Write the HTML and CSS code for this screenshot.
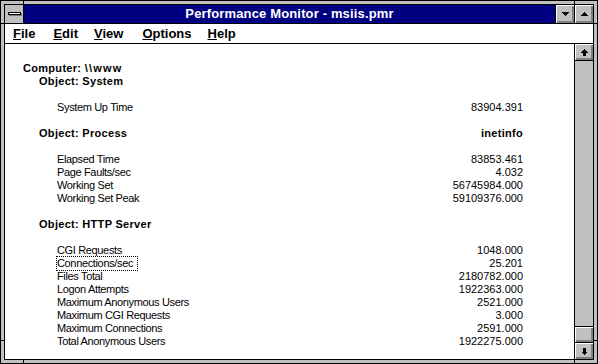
FILE: index.html
```html
<!DOCTYPE html>
<html lang="en">
<head>
    <meta charset="UTF-8">
    <title>Performance Monitor - msiis.pmr</title>
    <link rel="stylesheet" href="styles.css">
</head>
<body>
    <div class="window">
        <!-- frame corner ticks -->
        <div class="tick tick-top tick-left-x"></div>
        <div class="tick tick-top tick-right-x"></div>
        <div class="tick tick-bottom tick-left-x"></div>
        <div class="tick tick-bottom tick-right-x"></div>
        <div class="tick tick-side-l tick-up-y"></div>
        <div class="tick tick-side-l tick-down-y"></div>
        <div class="tick tick-side-r tick-up-y"></div>
        <div class="tick tick-side-r tick-down-y"></div>

        <div class="frame">
            <div class="titlebar">
                <div class="sysmenu"><span class="sysbar"></span></div>
                <div class="title">Performance Monitor - msiis.pmr</div>
                <div class="tbtn">
                    <svg width="7" height="4" viewBox="0 0 7 4" shape-rendering="crispEdges"><polygon points="0,0 7,0 3.5,4" fill="#000"/></svg>
                </div>
                <div class="tbtn">
                    <svg width="7" height="4" viewBox="0 0 7 4" shape-rendering="crispEdges"><polygon points="3.5,0 7,4 0,4" fill="#000"/></svg>
                </div>
            </div>

            <div class="menubar">
                <span class="menu"><u>F</u>ile</span>
                <span class="menu menu-edit"><u>E</u>dit</span>
                <span class="menu"><u>V</u>iew</span>
                <span class="menu menu-options"><u>O</u>ptions</span>
                <span class="menu"><u>H</u>elp</span>
            </div>

            <div class="client">
                <div class="report">
                    <div class="row head"><span>Computer: <span class="unc">\\www</span></span></div>
                    <div class="row head obj">Object: System</div>
                    <div class="blank"></div>
                    <div class="row ctr"><span class="name">System Up Time</span><span>83904.391</span></div>
                    <div class="blank"></div>
                    <div class="row head obj"><span>Object: Process</span><span>inetinfo</span></div>
                    <div class="blank"></div>
                    <div class="row ctr"><span class="name">Elapsed Time</span><span>83853.461</span></div>
                    <div class="row ctr"><span class="name">Page Faults/sec</span><span>4.032</span></div>
                    <div class="row ctr"><span class="name">Working Set</span><span>56745984.000</span></div>
                    <div class="row ctr"><span class="name">Working Set Peak</span><span>59109376.000</span></div>
                    <div class="blank"></div>
                    <div class="row head obj">Object: HTTP Server</div>
                    <div class="blank"></div>
                    <div class="row ctr"><span class="name">CGI Requests</span><span>1048.000</span></div>
                    <div class="row ctr"><span class="name focus">Connections/sec</span><span>25.201</span></div>
                    <div class="row ctr"><span class="name">Files Total</span><span>2180782.000</span></div>
                    <div class="row ctr"><span class="name">Logon Attempts</span><span>1922363.000</span></div>
                    <div class="row ctr"><span class="name">Maximum Anonymous Users</span><span>2521.000</span></div>
                    <div class="row ctr"><span class="name">Maximum CGI Requests</span><span>3.000</span></div>
                    <div class="row ctr"><span class="name">Maximum Connections</span><span>2591.000</span></div>
                    <div class="row ctr"><span class="name">Total Anonymous Users</span><span>1922275.000</span></div>
                </div>

                <div class="vscroll">
                    <div class="sbtn sbtn-up">
                        <svg width="7" height="7" viewBox="0 0 7 7" shape-rendering="crispEdges"><polygon points="3.5,0 7,3.5 5,3.5 5,7 2,7 2,3.5 0,3.5" fill="#000"/></svg>
                    </div>
                    <div class="track"></div>
                    <div class="thumb"></div>
                    <div class="sbtn sbtn-down">
                        <svg width="7" height="7" viewBox="0 0 7 7" shape-rendering="crispEdges"><polygon points="2,0 5,0 5,3.5 7,3.5 3.5,7 0,3.5 2,3.5" fill="#000"/></svg>
                    </div>
                </div>
            </div>
        </div>
    </div>
</body>
</html>
```
FILE: styles.css
```css
body {
    margin: 0;
    background: #fff;
    font-family: "Liberation Sans", Arial, sans-serif;
}
.window {
    position: relative;
    width: 598px;
    height: 364px;
    box-sizing: border-box;
    border: 1px solid #000;
    background: #c0c0c0;
    padding: 3px;
}
.tick {
    position: absolute;
    background: #000;
}
.tick-top, .tick-bottom {
    width: 1px;
    height: 3px;
}
.tick-top { top: 0; }
.tick-bottom { bottom: 0; }
.tick-left-x { left: 22px; }
.tick-right-x { left: 573px; }
.tick-side-l, .tick-side-r {
    width: 3px;
    height: 1px;
}
.tick-side-l { left: 0; }
.tick-side-r { right: 0; }
.tick-up-y { top: 22px; }
.tick-down-y { top: 339px; }

.frame {
    height: 100%;
    box-sizing: border-box;
    border: 1px solid #000;
    display: flex;
    flex-direction: column;
}

/* title bar */
.titlebar {
    display: flex;
    height: 19px;
    box-sizing: border-box;
    border-bottom: 1px solid #000;
}
.sysmenu {
    width: 19px;
    box-sizing: border-box;
    border-right: 1px solid #000;
    background: #c0c0c0;
    display: flex;
    align-items: center;
    justify-content: center;
}
.sysbar {
    width: 11px;
    height: 1px;
    background: #fff;
    border: 1px solid #000;
    box-shadow: 1px 1px 0 #808080;
    margin-top: -1px;
}
.title {
    flex: 1;
    background: #000080;
    color: #fff;
    font-weight: bold;
    font-size: 13px;
    letter-spacing: 0.15px;
    line-height: 18px;
    text-align: center;
}
.tbtn {
    width: 19px;
    box-sizing: border-box;
    border-left: 1px solid #000;
    background: #c0c0c0;
    box-shadow: inset 1px 1px 0 #fff, inset -1px -1px 0 #808080, inset -2px -2px 0 #808080;
    display: flex;
    align-items: center;
    justify-content: center;
}

/* menu bar */
.menubar {
    display: flex;
    height: 20px;
    box-sizing: border-box;
    border-bottom: 1px solid #000;
    background: #fff;
    font-weight: bold;
    font-size: 13px;
    line-height: 19px;
    white-space: nowrap;
}
.menu {
    padding: 0 8px;
}
.menu-edit { margin-left: 2px; }
.menu-options { margin-left: 3px; }

/* client area */
.client {
    flex: 1;
    display: flex;
    min-height: 0;
}
.report {
    flex: 1;
    background: #fff;
    padding: 18px 51px 0 18px;
    font-size: 11px;
    line-height: 13px;
    color: #000;
}
.row {
    display: flex;
    justify-content: space-between;
    white-space: nowrap;
}
.head {
    font-weight: bold;
    letter-spacing: 0.3px;
}
.unc {
    letter-spacing: 1.2px;
}
.obj {
    padding-left: 16px;
}
.ctr {
    padding-left: 34px;
}
.name {
    letter-spacing: -0.35px;
}
.blank {
    height: 13px;
}
.focus {
    outline: 1px dotted #000;
    outline-offset: 0;
    padding-right: 4px;
}

/* scroll bar */
.vscroll {
    width: 19px;
    box-sizing: border-box;
    border-left: 1px solid #000;
    background: #c0c0c0;
    display: flex;
    flex-direction: column;
}
.sbtn {
    height: 16px;
    background: #c0c0c0;
    box-shadow: inset 1px 1px 0 #fff, inset -1px -1px 0 #808080, inset -2px -2px 0 #808080;
    display: flex;
    align-items: center;
    justify-content: center;
}
.sbtn-up {
    border-bottom: 1px solid #000;
}
.sbtn-down {
    border-top: 1px solid #000;
}
.track {
    flex: 1;
}
.thumb {
    height: 15px;
    border-top: 1px solid #000;
    background: #c0c0c0;
    box-shadow: inset 1px 1px 0 #fff, inset -1px -1px 0 #808080, inset -2px -2px 0 #808080;
}
```
